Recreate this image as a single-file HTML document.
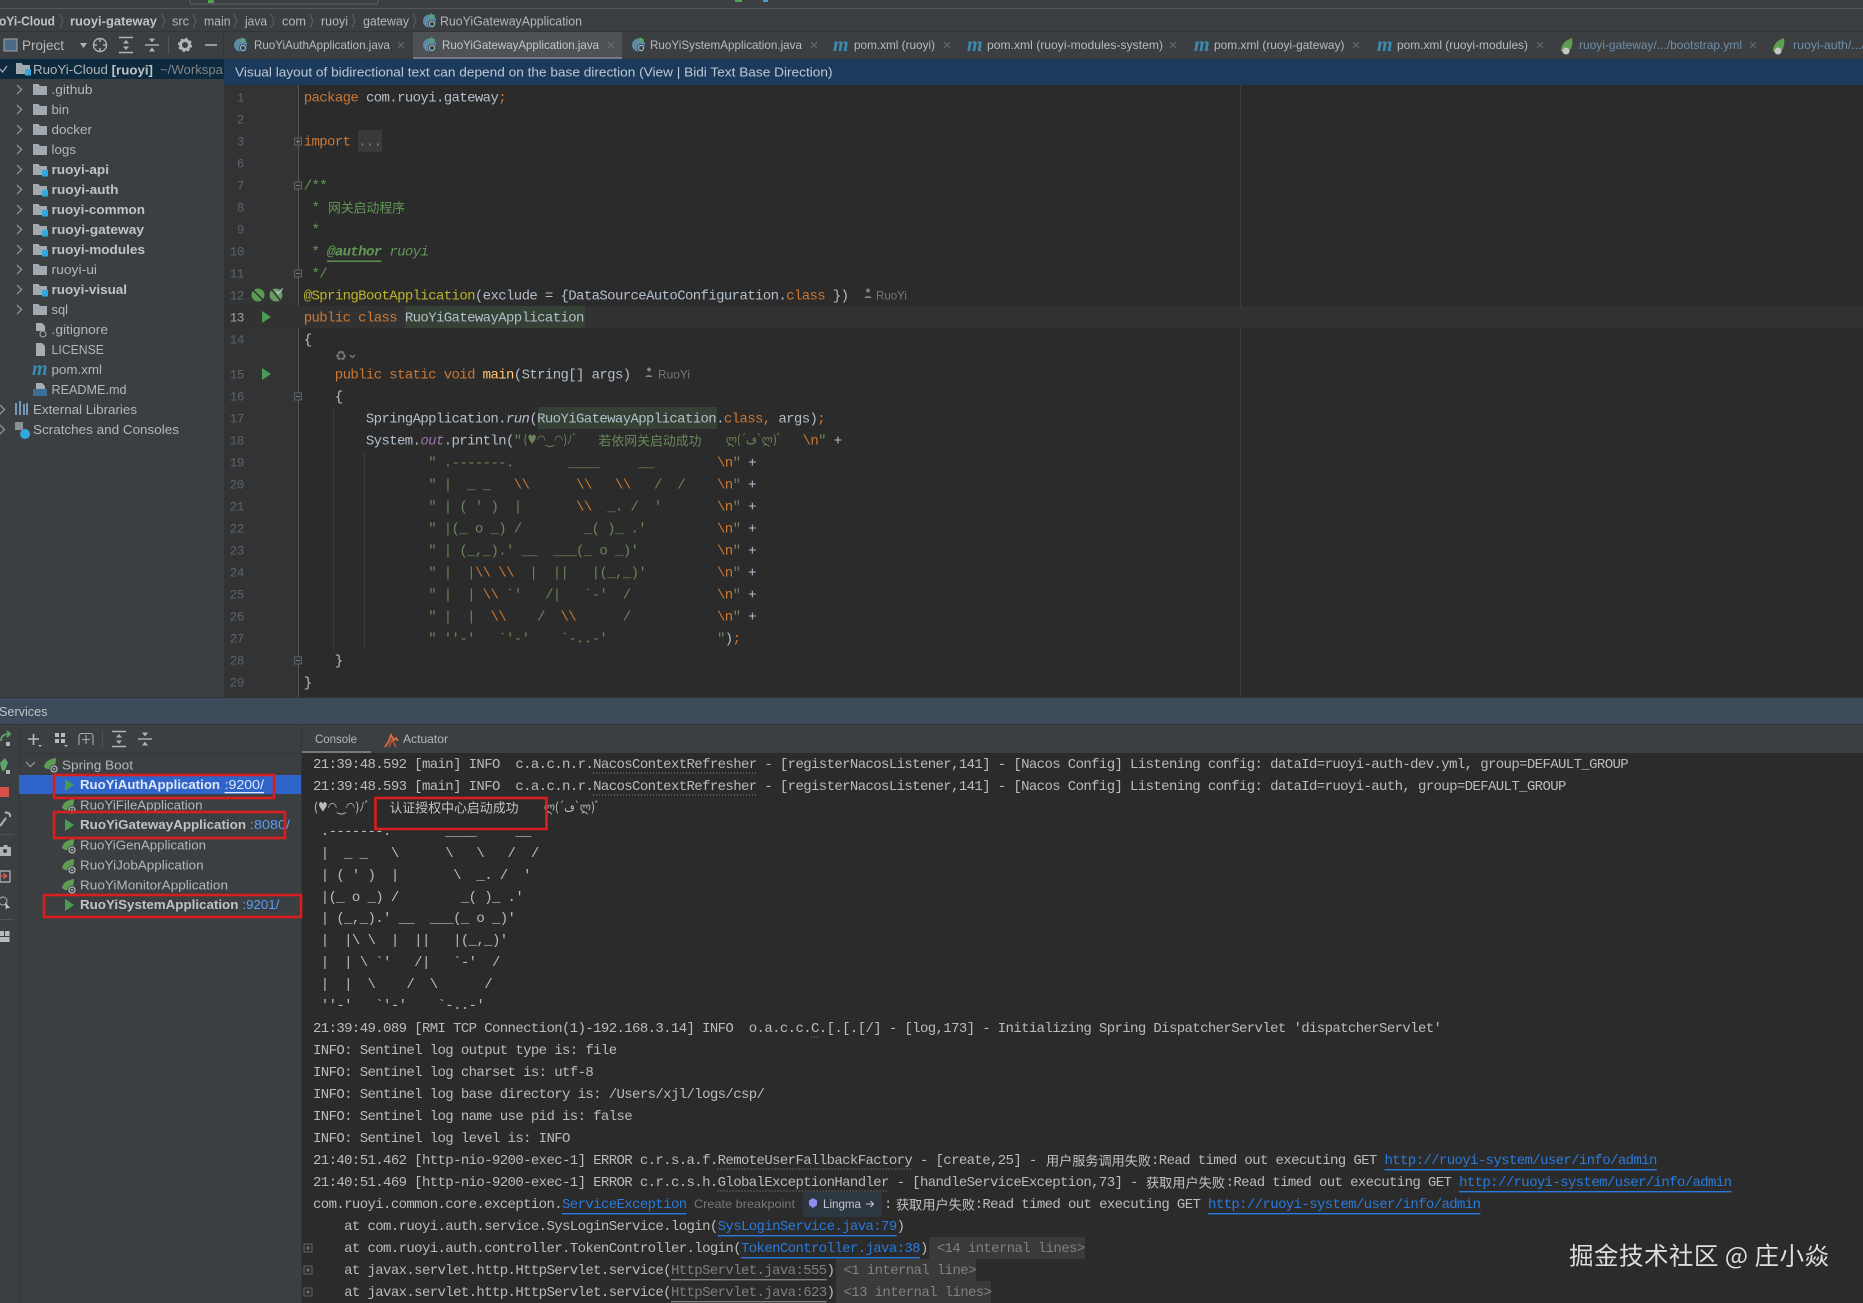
<!DOCTYPE html>
<html><head><meta charset="utf-8">
<style>
html,body{margin:0;padding:0;background:#3c3f41;width:1863px;height:1303px;overflow:hidden}
svg{display:block;position:absolute;left:0;top:0;filter:blur(.35px)}
text{white-space:pre;dominant-baseline:central}
.s{font-family:"Liberation Sans","Noto Sans CJK SC",sans-serif;font-size:13px;fill:#b4b6b8}
.b{font-weight:bold;fill:#c0c2c4}
.m{font-family:"Liberation Mono","DejaVu Sans Mono",monospace;font-size:14px;letter-spacing:-.62px;fill:#b3bfcb;transform:translateY(1px)}
.c{font-family:"Liberation Mono","DejaVu Sans Mono",monospace;font-size:14px;letter-spacing:-.62px;fill:#bbbbbb;transform:translateY(1px)}
.k,.o{fill:#cc7832}
.g{fill:#629755}
.st{fill:#6a8759}
.p{fill:#9876aa;font-style:italic}
.n{font-family:"Liberation Mono",monospace;font-size:12.5px;letter-spacing:-.4px;fill:#606366;text-anchor:end;transform:translateY(1px)}
.j{font-family:"Noto Sans CJK SC","Liberation Sans",sans-serif;font-size:13px;transform:translateY(-.5px)}
.e{font-family:"DejaVu Sans","Noto Sans CJK JP",sans-serif;font-size:13px}
.t{font-family:"Liberation Sans",sans-serif;font-size:12px;fill:#b8babc}
.y{fill:#6f8ea8}
.x{stroke:#6a6d70;stroke-width:1;fill:none}
.h{font-family:"Liberation Sans",sans-serif;font-size:12px;fill:#777}
.l{fill:#287bde;text-decoration:underline}
.lg{fill:#7b7f82;text-decoration:underline}
.ic{stroke:#b0b3b6;stroke-width:1.4;fill:none}
.mi{font-family:"Liberation Serif",serif;font-style:italic;font-weight:bold;font-size:20px;fill:#3a8cb4}
</style></head>
<body>
<svg width="1863" height="1303" viewBox="0 0 1863 1303" xmlns="http://www.w3.org/2000/svg">
<defs>
<path id="cv" d="M0 0l4.5 4.5L0 9" fill="none" stroke="#9a9da0" stroke-width="1.2"/>
<g id="fo"><path d="M0 1h5.5L7 3h7v9H0z" fill="#a2aab0"/></g>
<g id="md"><path d="M0 1h5.5L7 3h7v9H0z" fill="#a2aab0"/><rect x="9" y="7" width="6" height="6.500" fill="#35a7dc"/></g>
<g id="cl"><circle cx="6.5" cy="7" r="6.5" fill="#5d8ba3"/><circle cx="9" cy="10" r="4" fill="#3c3f41"/><circle cx="9" cy="10" r="2.6" fill="none" stroke="#8fc0da" stroke-width="1.2"/><path d="M7.5-1l5 3-5 3z" fill="#59a869"/></g>
<g id="sp"><path d="M0 9C1 3 6 1 12 0c0 5-1 9-4 11H3z" fill="#5f9d52"/><circle cx="10" cy="11" r="4.5" fill="#3c3f41"/><circle cx="10" cy="11" r="3" fill="none" stroke="#b0b3b6" stroke-width="1.3"/><circle cx="10" cy="11" r="1" fill="#b0b3b6"/></g>
<g id="lf"><path d="M0 13C0 6 5 2 11 0c1 6 0 11-4 14H2z" fill="#5f9d52"/><circle cx="5" cy="13" r="3.5" fill="#c5c7c9"/></g>
<path id="rn" d="M0 0l9 6-9 6z" fill="#499c54"/>
<g id="ex"><path d="M-7-7.500h14M-7 7.500h14" stroke="#b0b3b6" stroke-width="1.4"/><path d="M-3-1.500L0-5l3 3.500zM-3 1.500L0 5l3-3.500z" fill="#b0b3b6"/></g>
<g id="co"><path d="M-7 0h14" stroke="#b0b3b6" stroke-width="1.4"/><path d="M-3-6.500L0-2.500l3-4zM-3 6.500L0 2.500l3 4z" fill="#b0b3b6"/></g>
<g id="fp"><rect x="-3.5" y="-3.5" width="7" height="7" fill="#313335" stroke="#606366"/><path d="M-2 0h4" stroke="#7a7d80"/></g>
</defs>

<rect width="1863" height="1303" fill="#3c3f41"/>
<!-- top strip -->
<rect x="190" y="-6" width="188" height="10" rx="2" fill="none" stroke="#646669"/>
<rect x="208" y="0" width="6" height="3" fill="#4ea44f"/>
<rect x="735" y="0" width="7" height="2" fill="#4ea44f"/><rect x="763" y="0" width="5" height="2" fill="#4b9bd4"/>
<rect x="0" y="8" width="1863" height="1" fill="#55585a"/>

<!-- breadcrumb -->
<text class="s b" x="-1" y="21" textLength="56" lengthAdjust="spacingAndGlyphs">oYi-Cloud</text>
<text class="s b" x="70" y="21" textLength="87" lengthAdjust="spacingAndGlyphs">ruoyi-gateway</text>
<text class="s" x="172" y="21" textLength="17" lengthAdjust="spacingAndGlyphs">src</text>
<text class="s" x="204" y="21" textLength="26.5" lengthAdjust="spacingAndGlyphs">main</text>
<text class="s" x="245" y="21" textLength="22" lengthAdjust="spacingAndGlyphs">java</text>
<text class="s" x="282" y="21" textLength="24" lengthAdjust="spacingAndGlyphs">com</text>
<text class="s" x="321" y="21" textLength="27" lengthAdjust="spacingAndGlyphs">ruoyi</text>
<text class="s" x="363" y="21" textLength="46" lengthAdjust="spacingAndGlyphs">gateway</text>
<use href="#cl" x="423" y="14"/>
<text class="s" x="440" y="21" textLength="142" lengthAdjust="spacingAndGlyphs">RuoYiGatewayApplication</text>
<path d="M60 14l3 7-3 7M162 14l3 7-3 7M193 14l3 7-3 7M234 14l3 7-3 7M271 14l3 7-3 7M310 14l3 7-3 7M352 14l3 7-3 7M413 14l3 7-3 7" fill="none" stroke="#5c5f61"/>
<rect x="0" y="31" width="1863" height="1" fill="#333537"/>

<!-- project toolbar -->
<rect x="4" y="39" width="13" height="12" fill="#4a6a85" stroke="#a0a4a8"/>
<text class="s" x="22" y="45" textLength="42" lengthAdjust="spacingAndGlyphs" style="font-size:14px">Project</text>
<path d="M80 43h7l-3.5 5z" fill="#b0b3b6"/>
<circle cx="100" cy="45" r="6.5" class="ic"/><path d="M100 38v4M100 48v4M93 45h4M103 45h4" class="ic"/>
<use href="#ex" x="126" y="45"/><use href="#co" x="152" y="45"/>
<rect x="168" y="36" width="1" height="18" fill="#55585a"/>
<circle cx="185" cy="45" r="4.500" fill="none" stroke="#b0b3b6" stroke-width="3"/>
<circle cx="185" cy="45" r="6.300" fill="none" stroke="#b0b3b6" stroke-width="1.600" stroke-dasharray="2.500 2.450"/>
<path d="M205 45h12" stroke="#b0b3b6" stroke-width="1.6"/>

<!-- tab bar -->
<rect x="224" y="32" width="1639" height="27" fill="#3c3f41"/>
<rect x="223" y="32" width="1" height="27" fill="#333537"/>
<rect x="413" y="32" width="209" height="27" fill="#4e5254"/>
<rect x="413" y="57" width="209" height="2" fill="#747a80"/>
<use href="#cl" x="234" y="38"/><text class="t" x="254" y="45" textLength="136" lengthAdjust="spacingAndGlyphs">RuoYiAuthApplication.java</text><path d="M398 42l6 6m0-6l-6 6" class="x"/>
<use href="#cl" x="423" y="38"/><text class="t" x="442" y="45" textLength="157" lengthAdjust="spacingAndGlyphs" style="fill:#c4c6c8">RuoYiGatewayApplication.java</text><path d="M608 42l6 6m0-6l-6 6" class="x"/>
<use href="#cl" x="632" y="38"/><text class="t" x="650" y="45" textLength="152" lengthAdjust="spacingAndGlyphs">RuoYiSystemApplication.java</text><path d="M811 42l6 6m0-6l-6 6" class="x"/>
<text class="mi" x="833" y="45">m</text><text class="t" x="854" y="45" textLength="81" lengthAdjust="spacingAndGlyphs">pom.xml (ruoyi)</text><path d="M944 42l6 6m0-6l-6 6" class="x"/>
<text class="mi" x="967" y="45">m</text><text class="t" x="987" y="45" textLength="176" lengthAdjust="spacingAndGlyphs">pom.xml (ruoyi-modules-system)</text><path d="M1170 42l6 6m0-6l-6 6" class="x"/>
<text class="mi" x="1194" y="45">m</text><text class="t" x="1214" y="45" textLength="130.5" lengthAdjust="spacingAndGlyphs">pom.xml (ruoyi-gateway)</text><path d="M1353 42l6 6m0-6l-6 6" class="x"/>
<text class="mi" x="1377" y="45">m</text><text class="t" x="1397" y="45" textLength="131" lengthAdjust="spacingAndGlyphs">pom.xml (ruoyi-modules)</text><path d="M1537 42l6 6m0-6l-6 6" class="x"/>
<use href="#lf" x="1561" y="38"/><text class="t y" x="1579" y="45" textLength="163" lengthAdjust="spacingAndGlyphs">ruoyi-gateway/.../bootstrap.yml</text><path d="M1750 42l6 6m0-6l-6 6" class="x"/>
<use href="#lf" x="1773" y="38"/><text class="t y" x="1793" y="45" textLength="72" lengthAdjust="spacingAndGlyphs">ruoyi-auth/.../</text>

<!-- project tree -->
<rect x="0" y="59" width="224" height="20" fill="#0e2a3f"/>
<path d="M0 69l2.5 3L7 66" fill="none" stroke="#b0b3b6" stroke-width="1.2"/>
<use href="#md" x="16" y="62"/>
<text class="s" x="33" y="69.5" textLength="120" lengthAdjust="spacingAndGlyphs">RuoYi-Cloud <tspan class="b">[ruoyi]</tspan></text>
<text class="s" x="160" y="69.5" textLength="63" lengthAdjust="spacingAndGlyphs" style="fill:#808487">~/Workspa</text>

<use href="#cv" x="17" y="85"/><use href="#fo" x="33" y="83"/><text class="s" x="51.5" y="89.5" textLength="41" lengthAdjust="spacingAndGlyphs">.github</text>
<use href="#cv" x="17" y="105"/><use href="#fo" x="33" y="103"/><text class="s" x="51.5" y="109.5" textLength="17.5" lengthAdjust="spacingAndGlyphs">bin</text>
<use href="#cv" x="17" y="125"/><use href="#fo" x="33" y="123"/><text class="s" x="51.5" y="129.5" textLength="40.5" lengthAdjust="spacingAndGlyphs">docker</text>
<use href="#cv" x="17" y="145"/><use href="#fo" x="33" y="143"/><text class="s" x="51.5" y="149.5" textLength="24.5" lengthAdjust="spacingAndGlyphs">logs</text>
<use href="#cv" x="17" y="165"/><use href="#md" x="33" y="163"/><text class="s b" x="51.5" y="169.5" textLength="57.5" lengthAdjust="spacingAndGlyphs">ruoyi-api</text>
<use href="#cv" x="17" y="185"/><use href="#md" x="33" y="183"/><text class="s b" x="51.5" y="189.5" textLength="67" lengthAdjust="spacingAndGlyphs">ruoyi-auth</text>
<use href="#cv" x="17" y="205"/><use href="#md" x="33" y="203"/><text class="s b" x="51.5" y="209.5" textLength="93.5" lengthAdjust="spacingAndGlyphs">ruoyi-common</text>
<use href="#cv" x="17" y="225"/><use href="#md" x="33" y="223"/><text class="s b" x="51.5" y="229.5" textLength="92.5" lengthAdjust="spacingAndGlyphs">ruoyi-gateway</text>
<use href="#cv" x="17" y="245"/><use href="#md" x="33" y="243"/><text class="s b" x="51.5" y="249.5" textLength="93.5" lengthAdjust="spacingAndGlyphs">ruoyi-modules</text>
<use href="#cv" x="17" y="265"/><use href="#fo" x="33" y="263"/><text class="s" x="51.5" y="269.5" textLength="45.5" lengthAdjust="spacingAndGlyphs">ruoyi-ui</text>
<use href="#cv" x="17" y="285"/><use href="#md" x="33" y="283"/><text class="s b" x="51.5" y="289.5" textLength="75.5" lengthAdjust="spacingAndGlyphs">ruoyi-visual</text>
<use href="#cv" x="17" y="305"/><use href="#fo" x="33" y="303"/><text class="s" x="51.5" y="309.5" textLength="16.5" lengthAdjust="spacingAndGlyphs">sql</text>
<g fill="#a7adb2"><path d="M36 323h6l3 3v5h-9z"/><circle cx="43" cy="334" r="3" fill="#3c3f41" stroke="#a7adb2"/></g>
<text class="s" x="51.5" y="329.5" textLength="56.5" lengthAdjust="spacingAndGlyphs">.gitignore</text>
<path d="M36 343h6l3 3v10h-9z" fill="#a7adb2"/>
<text class="s" x="51.5" y="349.5" textLength="52.5" lengthAdjust="spacingAndGlyphs">LICENSE</text>
<text class="mi" x="32" y="369">m</text>
<text class="s" x="51.5" y="369.5" textLength="50.5" lengthAdjust="spacingAndGlyphs">pom.xml</text>
<path d="M36 383h6l3 3v3h-9z" fill="#a7adb2"/><rect x="33" y="389" width="14" height="7" fill="#3d6f92"/>
<text class="s" x="51.5" y="389.5" textLength="75" lengthAdjust="spacingAndGlyphs">README.md</text>
<use href="#cv" x="0" y="405"/><path d="M16 403v12M20 401v14M24 404v11M27 403v12" stroke="#7aa3c4" stroke-width="1.8"/>
<text class="s" x="33" y="409.5" textLength="104" lengthAdjust="spacingAndGlyphs">External Libraries</text>
<use href="#cv" x="0" y="425"/><path d="M15 422h8v8h-8z" fill="#8c9196"/><circle cx="25" cy="434" r="5" fill="#35a7dc"/>
<text class="s" x="33" y="429.5" textLength="146" lengthAdjust="spacingAndGlyphs">Scratches and Consoles</text>

<!-- banner -->
<rect x="224" y="59" width="1639" height="26" fill="#1c3a5b"/>
<text class="s" x="235" y="72" textLength="597.5" lengthAdjust="spacingAndGlyphs" style="fill:#bcc8d4">Visual layout of bidirectional text can depend on the base direction (View | Bidi Text Base Direction)</text>

<!-- editor -->
<rect x="224" y="85" width="1639" height="612" fill="#2b2b2b"/>
<rect x="224" y="85" width="74" height="612" fill="#313335"/>
<rect x="298" y="85" width="1" height="612" fill="#555555"/>
<rect x="1240" y="85" width="1" height="612" fill="#3d3d3d"/>
<rect x="224" y="306" width="1639" height="22" fill="#323232"/>
<rect x="405" y="306" width="180" height="22" fill="#344134"/>
<rect x="538" y="407" width="179" height="22" fill="#344134"/>
<rect x="358" y="130" width="24" height="22" fill="#3a3a3a"/>
<rect x="333" y="407" width="1" height="243" fill="#3b3b3b"/>
<rect x="364" y="451" width="1" height="197" fill="#3b3b3b"/>

<g>
<text class="n" x="244" y="97.5">1</text><text class="n" x="244" y="119.5">2</text><text class="n" x="244" y="141.5">3</text><text class="n" x="244" y="163.5">6</text><text class="n" x="244" y="185.5">7</text><text class="n" x="244" y="207.5">8</text><text class="n" x="244" y="229.5">9</text><text class="n" x="244" y="251.5">10</text><text class="n" x="244" y="273.5">11</text><text class="n" x="244" y="295.5">12</text><text class="n" x="244" y="317.5" style="fill:#a4a3a3">13</text><text class="n" x="244" y="339.5">14</text><text class="n" x="244" y="374.5">15</text><text class="n" x="244" y="396.5">16</text><text class="n" x="244" y="418.5">17</text><text class="n" x="244" y="440.5">18</text><text class="n" x="244" y="462.5">19</text><text class="n" x="244" y="484.5">20</text><text class="n" x="244" y="506.5">21</text><text class="n" x="244" y="528.5">22</text><text class="n" x="244" y="550.5">23</text><text class="n" x="244" y="572.5">24</text><text class="n" x="244" y="594.5">25</text><text class="n" x="244" y="616.5">26</text><text class="n" x="244" y="638.5">27</text><text class="n" x="244" y="660.5">28</text><text class="n" x="244" y="682.5">29</text>
</g>

<!-- gutter icons -->
<circle cx="258" cy="295" r="6.5" fill="#5b9a55"/><path d="M253 290l10 10" stroke="#2b2b2b" stroke-width="1.4"/>
<circle cx="276" cy="295" r="6.5" fill="#6a9a64"/><path d="M272 290l8 10" stroke="#2b2b2b" stroke-width="1.4"/><path d="M276 291l2.5 2.5 4-5" fill="none" stroke="#b8d0e0" stroke-width="1.2"/>
<use href="#rn" x="262" y="311"/><use href="#rn" x="262" y="368"/>
<use href="#fp" x="298" y="141.5"/><path d="M298 139.5v4" stroke="#7a7d80"/>
<use href="#fp" x="298" y="185.5"/><use href="#fp" x="298" y="273.5"/><use href="#fp" x="298" y="396.5"/><use href="#fp" x="298" y="660.5"/>

<!-- code -->
<text class="m" x="303.7" y="97.5"><tspan class="k">package</tspan> com.ruoyi.gateway<tspan class="k">;</tspan></text>
<text class="m" x="303.7" y="141.5"><tspan class="k">import</tspan> <tspan fill="#7b7f82">...</tspan></text>
<text class="m g" x="303.7" y="185.5" style="fill:#629755">/**</text>
<text class="m" x="303.7" y="207.5" style="fill:#629755"> *</text>
<text class="j" x="328" y="207.5" fill="#629755" textLength="77" lengthAdjust="spacingAndGlyphs">网关启动程序</text>
<text class="m" x="303.7" y="229.5" style="fill:#629755"> *</text>
<text class="m" x="303.7" y="251.5" style="fill:#629755"> * <tspan font-weight="bold" font-style="italic" text-decoration="underline">@author</tspan> <tspan font-style="italic">ruoyi</tspan></text>
<text class="m" x="303.7" y="273.5" style="fill:#629755"> */</text>
<text class="m" x="303.7" y="295.5"><tspan fill="#bbb529">@SpringBootApplication</tspan>(exclude = {DataSourceAutoConfiguration.<tspan class="k">class</tspan> })</text>
<path d="M868 292.500a2 2 0 1 1 .01 0zM864.500 298c0-2.500 7-2.500 7 0z" fill="#808487"/>
<text class="s" x="876" y="295.500" textLength="31" lengthAdjust="spacingAndGlyphs" style="font-size:12px;fill:#747779">RuoYi</text>
<text class="m" x="303.7" y="317.500"><tspan class="k">public class </tspan>RuoYiGatewayApplication</text>
<text class="m" x="303.700" y="339.500">{</text>
<text class="s" x="336" y="357" style="font-size:10px;fill:#7a7d80">♻</text><path d="M350 355l2.500 2.500 2.500-2.500" fill="none" stroke="#8a8d90"/>
<text class="m" x="334.800" y="374.500"><tspan class="k">public static void </tspan><tspan fill="#ffc66d">main</tspan>(String[] args)</text>
<path d="M649 371.500a2 2 0 1 1 .01 0zM645.500 377c0-2.500 7-2.500 7 0z" fill="#808487"/>
<text class="s" x="658" y="374.500" textLength="32" lengthAdjust="spacingAndGlyphs" style="font-size:12px;fill:#747779">RuoYi</text>
<text class="m" x="334.800" y="396.500">{</text>
<text class="m" x="365.900" y="418.500">SpringApplication.<tspan font-style="italic">run</tspan>(RuoYiGatewayApplication.<tspan class="k">class,</tspan> args)<tspan class="k">;</tspan></text>
<text class="m" x="365.900" y="440.500">System.<tspan class="p">out</tspan>.println(<tspan class="st">"</tspan></text>
<text class="e st" x="523.500" y="440.500" textLength="54" lengthAdjust="spacingAndGlyphs">(♥◠‿◠)ﾉﾞ</text>
<text class="j st" x="598.500" y="440.500" textLength="103" lengthAdjust="spacingAndGlyphs">若依网关启动成功</text>
<text class="e st" x="726" y="440.500" textLength="56" lengthAdjust="spacingAndGlyphs">ლ(´ڡ`ლ)ﾞ</text>
<text class="m" x="802.600" y="440.500"><tspan class="o">\n</tspan><tspan class="st">"</tspan> +</text>

<g>
<text class="m st" x="428.200" y="462.500" style="fill:#6a8759">" .-------.       ____     __</text>
<text class="m st" x="428.200" y="484.500" style="fill:#6a8759">" |  _ _   <tspan class="o">\\</tspan>      <tspan class="o">\\</tspan>   <tspan class="o">\\</tspan>   /  /</text>
<text class="m st" x="428.200" y="506.500" style="fill:#6a8759">" | ( ' )  |       <tspan class="o">\\</tspan>  _. /  '</text>
<text class="m st" x="428.200" y="528.500" style="fill:#6a8759">" |(_ o _) /        _( )_ .'</text>
<text class="m st" x="428.200" y="550.500" style="fill:#6a8759">" | (_,_).' __  ___(_ o _)'</text>
<text class="m st" x="428.200" y="572.500" style="fill:#6a8759">" |  |<tspan class="o">\\</tspan> <tspan class="o">\\</tspan>  |  ||   |(_,_)'</text>
<text class="m st" x="428.200" y="594.500" style="fill:#6a8759">" |  | <tspan class="o">\\</tspan> `'   /|   `-'  /</text>
<text class="m st" x="428.200" y="616.500" style="fill:#6a8759">" |  |  <tspan class="o">\\</tspan>    /  <tspan class="o">\\</tspan>      /</text>
<text class="m st" x="428.200" y="638.500" style="fill:#6a8759">" ''-'   `'-'    `-..-'</text>
</g>
<text class="m" x="717" y="462.500"><tspan class="o">\n</tspan><tspan class="st">"</tspan> +</text>
<text class="m" x="717" y="484.500"><tspan class="o">\n</tspan><tspan class="st">"</tspan> +</text>
<text class="m" x="717" y="506.500"><tspan class="o">\n</tspan><tspan class="st">"</tspan> +</text>
<text class="m" x="717" y="528.500"><tspan class="o">\n</tspan><tspan class="st">"</tspan> +</text>
<text class="m" x="717" y="550.500"><tspan class="o">\n</tspan><tspan class="st">"</tspan> +</text>
<text class="m" x="717" y="572.500"><tspan class="o">\n</tspan><tspan class="st">"</tspan> +</text>
<text class="m" x="717" y="594.500"><tspan class="o">\n</tspan><tspan class="st">"</tspan> +</text>
<text class="m" x="717" y="616.500"><tspan class="o">\n</tspan><tspan class="st">"</tspan> +</text>
<text class="m" x="717" y="638.500"><tspan class="st">"</tspan>)<tspan class="k">;</tspan></text>
<text class="m" x="334.800" y="660.500">}</text>
<text class="m" x="303.700" y="682.500">}</text>

<!-- services -->
<rect x="0" y="697" width="1863" height="1" fill="#2f3133"/>
<rect x="0" y="698" width="1863" height="26" fill="#3c4a59"/>
<rect x="0" y="724" width="1863" height="1" fill="#323437"/>
<text class="s" x="-1" y="711.500" textLength="48.500" lengthAdjust="spacingAndGlyphs" style="fill:#c0c4c8">Services</text>
<rect x="19" y="725" width="1" height="578" fill="#333537"/>
<rect x="301" y="725" width="1" height="578" fill="#333537"/>
<rect x="20" y="753" width="281" height="1" fill="#333537"/>
<rect x="302" y="753" width="1561" height="550" fill="#2b2b2b"/>
<rect x="302" y="751" width="69" height="2" fill="#747a80"/>

<!-- left strip -->
<path d="M1 741c0-5 3-7 8-7M7 731l3 3-3 3" fill="none" stroke="#59a869" stroke-width="1.800"/><rect x="6" y="742" width="4" height="4" fill="#b0b3b6"/>
<path d="M0 763l5-5 3 5-3 7-3 1z" fill="#59a869"/><rect x="6" y="770" width="4" height="4" fill="#b0b3b6"/>
<rect x="0" y="787" width="9" height="10" fill="#d9504f"/>
<path d="M0 826l6-8M5 813a3.500 3.500 0 0 1 5 4" fill="none" stroke="#b0b3b6" stroke-width="2"/>
<rect x="0" y="834" width="14" height="1" fill="#505356"/>
<path d="M0 847h3l1-2h3l1 2h3v9H0z" fill="#b0b3b6"/><circle cx="5" cy="851" r="2" fill="#3c3f41"/>
<rect x="0" y="871" width="10" height="11" fill="none" stroke="#b0b3b6" stroke-width="1.300"/><path d="M0 876h5M4 873.500l3 2.500-3 2.500z" stroke="#d9504f" fill="#d9504f"/>
<circle cx="3" cy="901" r="4" fill="none" stroke="#b0b3b6"/><path d="M5 902l5 6-3 0-1 2z" fill="#c5c7c9"/>
<rect x="0" y="919" width="14" height="1" fill="#505356"/>
<path d="M0 931h4v5H0zM5 931h4.500v5H5zM0 937h9.500v5H0z" fill="#b8babc"/>

<!-- services toolbar -->
<path d="M28 739h11M33.500 734v11" stroke="#b8babc" stroke-width="1.600"/><path d="M38 745h4l-2 2z" fill="#b8babc"/>
<path d="M55 733h4v4h-4zM61 733h4v4h-4zM55 739h4v4h-4zM61 739h4v4h-4z" fill="#b8babc"/><path d="M64 745h4l-2 2z" fill="#b8babc"/>
<path d="M79 745v-9a2.500 2.500 0 0 1 2.500-2.500h9a2.500 2.500 0 0 1 2.500 2.500v9M86 735v9M82 739.500h8" fill="none" stroke="#a8abae" stroke-width="1.100"/>
<rect x="102" y="730" width="1" height="18" fill="#505356"/>
<use href="#ex" x="119" y="739"/>
<use href="#co" x="145" y="739"/>

<!-- services tree -->
<path d="M26 762l4.500 4.500L35 762" fill="none" stroke="#9a9da0" stroke-width="1.200"/>
<use href="#sp" x="44" y="758"/>
<text class="s" x="62" y="765" textLength="71" lengthAdjust="spacingAndGlyphs">Spring Boot</text>
<rect x="19" y="775" width="282" height="19" fill="#2f65ca"/>
<use href="#rn" x="65" y="779"/>
<text class="s b" x="80" y="784.500" textLength="140" lengthAdjust="spacingAndGlyphs" style="fill:#dfe6f2">RuoYiAuthApplication</text>
<text class="s" x="224.600" y="784.500" textLength="39.400" lengthAdjust="spacingAndGlyphs" style="fill:#dfe6f2;text-decoration:underline">:9200/</text>
<use href="#sp" x="62" y="799"/><text class="s" x="80" y="805" textLength="122.500" lengthAdjust="spacingAndGlyphs">RuoYiFileApplication</text>
<use href="#rn" x="65" y="819"/>
<text class="s b" x="80" y="824.500" textLength="166" lengthAdjust="spacingAndGlyphs">RuoYiGatewayApplication</text>
<text class="s" x="250" y="824.500" textLength="40" lengthAdjust="spacingAndGlyphs" style="fill:#589df6">:8080/</text>
<use href="#sp" x="62" y="839"/><text class="s" x="80" y="845" textLength="126" lengthAdjust="spacingAndGlyphs">RuoYiGenApplication</text>
<use href="#sp" x="62" y="859"/><text class="s" x="80" y="865" textLength="123.600" lengthAdjust="spacingAndGlyphs">RuoYiJobApplication</text>
<use href="#sp" x="62" y="879"/><text class="s" x="80" y="885" textLength="148" lengthAdjust="spacingAndGlyphs">RuoYiMonitorApplication</text>
<use href="#rn" x="65" y="899"/>
<text class="s b" x="80" y="904.500" textLength="158.400" lengthAdjust="spacingAndGlyphs">RuoYiSystemApplication</text>
<text class="s" x="242.400" y="904.500" textLength="37" lengthAdjust="spacingAndGlyphs" style="fill:#589df6">:9201/</text>

<!-- console tabs -->
<text class="s" x="315" y="739" textLength="42" lengthAdjust="spacingAndGlyphs" style="font-size:12px">Console</text>
<path d="M385 747l4-6 2-6 3 5 2-2 2 3" fill="none" stroke="#d9703c" stroke-width="1.800"/><path d="M389 747l3-7 4 7" fill="none" stroke="#c9502f" stroke-width="1.500"/>
<text class="s" x="403" y="739" textLength="45" lengthAdjust="spacingAndGlyphs" style="font-size:12px">Actuator</text>

<!-- console -->
<text class="c" x="313" y="764">21:39:48.592 [main] INFO  c.a.c.n.r.NacosContextRefresher - [registerNacosListener,141] - [Nacos Config] Listening config: dataId=ruoyi-auth-dev.yml, group=DEFAULT_GROUP</text>
<text class="c" x="313" y="786">21:39:48.593 [main] INFO  c.a.c.n.r.NacosContextRefresher - [registerNacosListener,141] - [Nacos Config] Listening config: dataId=ruoyi-auth, group=DEFAULT_GROUP</text>
<path d="M593 773h163M593 795h163M717.600 1169h194.500M717.600 1191h171.200M811 1037h8" stroke="#8a8a8a" stroke-dasharray="1 2"/>
<text class="e" x="314" y="808" fill="#bbbbbb" textLength="56" lengthAdjust="spacingAndGlyphs">(♥◠‿◠)ﾉﾞ</text>
<text class="j" x="389.500" y="807.500" fill="#c4c4c4" textLength="129" lengthAdjust="spacingAndGlyphs">认证授权中心启动成功</text>
<text class="e" x="544" y="808" fill="#bbbbbb" textLength="56" lengthAdjust="spacingAndGlyphs">ლ(´ڡ`ლ)ﾞ</text>
<text class="c" x="313" y="831"> .-------.       ____     __</text>
<text class="c" x="313" y="853"> |  _ _   \      \   \   /  /</text>
<text class="c" x="313" y="875"> | ( ' )  |       \  _. /  '</text>
<text class="c" x="313" y="897"> |(_ o _) /        _( )_ .'</text>
<text class="c" x="313" y="918"> | (_,_).' __  ___(_ o _)'</text>
<text class="c" x="313" y="940"> |  |\ \  |  ||   |(_,_)'</text>
<text class="c" x="313" y="962"> |  | \ `'   /|   `-'  /</text>
<text class="c" x="313" y="984"> |  |  \    /  \      /</text>
<text class="c" x="313" y="1005"> ''-'   `'-'    `-..-'</text>
<text class="c" x="313" y="1028">21:39:49.089 [RMI TCP Connection(1)-192.168.3.14] INFO  o.a.c.c.C.[.[.[/] - [log,173] - Initializing Spring DispatcherServlet 'dispatcherServlet'</text>
<text class="c" x="313" y="1050">INFO: Sentinel log output type is: file</text>
<text class="c" x="313" y="1072">INFO: Sentinel log charset is: utf-8</text>
<text class="c" x="313" y="1094">INFO: Sentinel log base directory is: /Users/xjl/logs/csp/</text>
<text class="c" x="313" y="1116">INFO: Sentinel log name use pid is: false</text>
<text class="c" x="313" y="1138">INFO: Sentinel log level is: INFO</text>
<text class="c" x="313" y="1160">21:40:51.462 [http-nio-9200-exec-1] ERROR c.r.s.a.f.RemoteUserFallbackFactory - [create,25] -</text>
<text class="j" x="1046" y="1160.500" fill="#c4c4c4" textLength="105" lengthAdjust="spacingAndGlyphs">用户服务调用失败</text>
<text class="c" x="1151" y="1160">:Read timed out executing GET <tspan class="l">http://ruoyi-system/user/info/admin</tspan></text>
<text class="c" x="313" y="1182">21:40:51.469 [http-nio-9200-exec-1] ERROR c.r.c.s.h.GlobalExceptionHandler - [handleServiceException,73] -</text>
<text class="j" x="1146" y="1182.500" fill="#c4c4c4" textLength="79" lengthAdjust="spacingAndGlyphs">获取用户失败</text>
<text class="c" x="1225.600" y="1182">:Read timed out executing GET <tspan class="l">http://ruoyi-system/user/info/admin</tspan></text>
<text class="c" x="313" y="1204">com.ruoyi.common.core.exception.<tspan class="l">ServiceException</tspan></text>
<text class="h" x="694" y="1204" textLength="101" lengthAdjust="spacingAndGlyphs">Create breakpoint</text>
<rect x="802.500" y="1192" width="79.500" height="25" rx="3" fill="#2d3742"/>
<path d="M813 1198l4 2.500v4.500l-4 3-4-3v-4.500z" fill="#8f8cf0"/>
<text class="h" x="823" y="1204" textLength="38" lengthAdjust="spacingAndGlyphs" style="fill:#c5c9ce">Lingma</text>
<path d="M866 1204h7M870.500 1201l3 3-3 3" fill="none" stroke="#c5c9ce"/>
<text class="c" x="884" y="1204">:</text>
<text class="j" x="896" y="1204.500" fill="#c4c4c4" textLength="79" lengthAdjust="spacingAndGlyphs">获取用户失败</text>
<text class="c" x="974.600" y="1204">:Read timed out executing GET <tspan class="l">http://ruoyi-system/user/info/admin</tspan></text>
<rect x="929" y="1237" width="156" height="22" fill="#3a3a3a"/>
<rect x="836" y="1259" width="140" height="22" fill="#3a3a3a"/>
<rect x="836" y="1281" width="155" height="22" fill="#3a3a3a"/>
<text class="c" x="313" y="1226">    at com.ruoyi.auth.service.SysLoginService.login(<tspan class="l">SysLoginService.java:79</tspan>)</text>
<text class="c" x="313" y="1248">    at com.ruoyi.auth.controller.TokenController.login(<tspan class="l">TokenController.java:38</tspan>)</text>
<text class="c" x="936.700" y="1248" style="fill:#808080">&lt;14 internal lines&gt;</text>
<text class="c" x="313" y="1270">    at javax.servlet.http.HttpServlet.service(<tspan class="lg">HttpServlet.java:555</tspan>)</text>
<text class="c" x="843.500" y="1270" style="fill:#808080">&lt;1 internal line&gt;</text>
<text class="c" x="313" y="1292">    at javax.servlet.http.HttpServlet.service(<tspan class="lg">HttpServlet.java:623</tspan>)</text>
<text class="c" x="843.500" y="1292" style="fill:#808080">&lt;13 internal lines&gt;</text>
<g fill="#2b2b2b" stroke="#606366"><rect x="304" y="1244" width="8" height="8"/><rect x="304" y="1266" width="8" height="8"/><rect x="304" y="1288" width="8" height="8"/></g>
<path d="M306 1248h4M308 1246v4M306 1270h4M308 1268v4M306 1292h4M308 1290v4" stroke="#7a7d80"/>

<!-- watermark -->
<text x="1569" y="1255" textLength="260" lengthAdjust="spacing" style="font-family:'Noto Sans CJK SC','Liberation Sans',sans-serif;font-size:24.500px;fill:#dedede">掘金技术社区 @ 庄小焱</text>

<!-- red boxes -->
<g fill="none" stroke="#d81e1e" stroke-width="2.600">
<rect x="54" y="775" width="220" height="23"/>
<rect x="54" y="812" width="231" height="26"/>
<rect x="44" y="895" width="257" height="22"/>
<rect x="375.500" y="798" width="171" height="31"/>
</g>
</svg>
</body></html>
